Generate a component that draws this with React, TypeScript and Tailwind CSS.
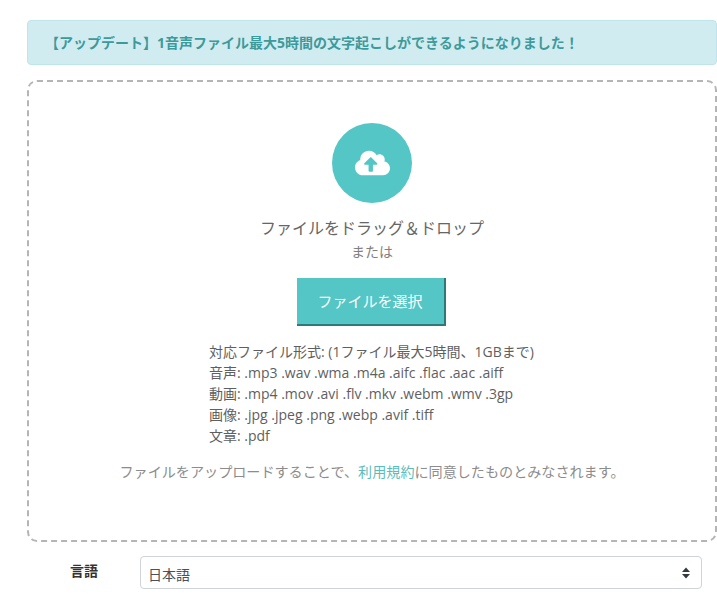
import React from "react";

function CloudUpload() {
  return (
    <svg viewBox="0 0 640 512" className="w-[35px] h-[28px]" fill="#ffffff">
      <path d="M537.6 226.6c4.1-10.7 6.4-22.4 6.4-34.6 0-53-43-96-96-96-19.7 0-38.1 6-53.3 16.2C367 64.2 315.3 32 256 32c-88.4 0-160 71.6-160 160 0 2.7.1 5.4.2 8.1C40.2 219.8 0 273.2 0 336c0 79.5 64.5 144 144 144h368c70.7 0 128-57.3 128-128 0-61.9-44-113.6-102.4-125.4zM393.4 288H328v112c0 8.8-7.2 16-16 16h-48c-8.8 0-16-7.2-16-16V288h-65.4c-14.3 0-21.4-17.2-11.3-27.3l105.4-105.4c6.2-6.2 16.4-6.2 22.6 0l105.4 105.4c10.1 10.1 2.9 27.3-11.3 27.3z" />
    </svg>
  );
}

export default function App() {
  return (
    <div className="w-[717px] h-[594px] overflow-hidden bg-white font-['Open_Sans','Noto_Sans_CJK_JP',sans-serif] text-[14px] text-[#555555]">
      <div className="pt-5 pl-[27px]">
        <div className="h-[45px] w-[690px] flex items-center pl-[17px] pb-[1px] bg-[#d1ecf1] border border-[#bee5eb] rounded-[4px] text-[#3d9a9b] text-[14px] font-bold">
          <span>【アップデート】1音声ファイル最大5時間の文字起こしができるようになりました！</span>
        </div>
        <div className="mt-[15px] h-[462px] w-[690px] border-2 border-dashed border-[#b5b5b5] rounded-[10px] flex flex-col items-center pt-[41px]">
          <div className="w-20 h-20 rounded-full bg-[#54c6c5] flex items-center justify-center">
            <CloudUpload />
          </div>
          <div className="mt-[13px] h-[24px] leading-[24px] text-[16px] text-[#666666]">ファイルをドラッグ＆ドロップ</div>
          <div className="mt-[1px] h-[22px] leading-[22px] text-[14px] text-[#808080]">または</div>
          <button className="mt-[15px] -ml-[2px] w-[149px] h-[48px] pt-[1px] bg-[#54c6c5] border-r-2 border-b-2 border-[#2f7a79] text-white text-[15px]">
            ファイルを選択
          </button>
          <div className="mt-[15px] w-[326px] text-[14px] leading-[21px] text-[#5f5f5f]">
            <div>対応ファイル形式: (1ファイル最大5時間、1GBまで)</div>
            <div>音声: .mp3 .wav .wma .m4a .aifc .flac .aac .aiff</div>
            <div>動画: .mp4 .mov .avi .flv .mkv .webm .wmv .3gp</div>
            <div>画像: .jpg .jpeg .png .webp .avif .tiff</div>
            <div>文章: .pdf</div>
          </div>
          <div className="mt-[15px] text-[14.1px] leading-[21px] text-[#8c8c8c]">
            ファイルをアップロードすることで、<a className="text-[#5bbcbb]">利用規約</a>に同意したものとみなされます。
          </div>
        </div>
        <div className="mt-[14px] flex items-start">
          <div className="w-[113px] pl-[43px] pt-[4px] text-[14px] leading-[21px] font-bold text-[#333333]">言語</div>
          <div className="relative w-[562px] h-[33px] border border-[#ced4da] rounded-[4px] bg-white flex items-center pl-[7px] pt-[3px] text-[14px] text-[#495057]">
            日本語
            <svg viewBox="0 0 8 12" className="absolute right-[11px] top-[10px] w-[8px] h-[12px]" fill="#343a40">
              <path d="M4 0.5 L8 5 H0 Z M0 7 H8 L4 11.5 Z" />
            </svg>
          </div>
        </div>
      </div>
    </div>
  );
}
